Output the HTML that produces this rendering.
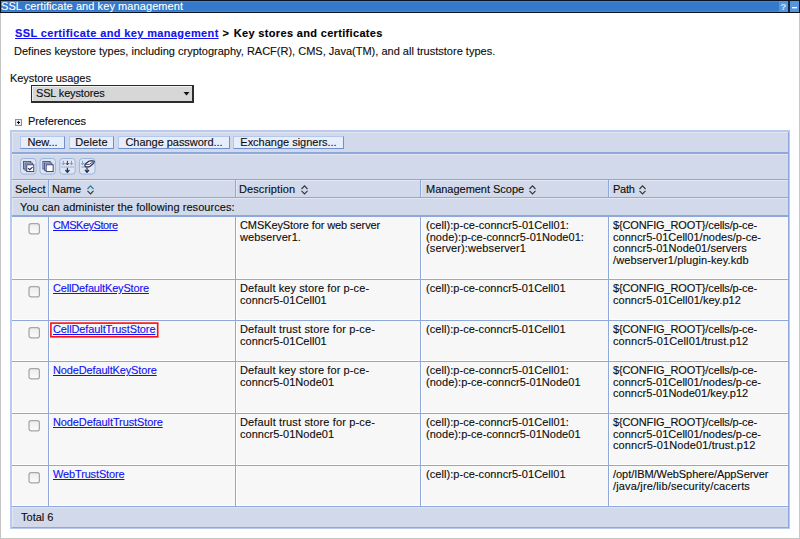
<!DOCTYPE html>
<html>
<head>
<meta charset="utf-8">
<title>SSL certificate and key management</title>
<style>
html,body{margin:0;padding:0;}
body{width:800px;height:539px;overflow:hidden;background:#fff;position:relative;
  font-family:"Liberation Sans",sans-serif;font-size:11.0px;line-height:13px;color:#0d0d0d;-webkit-text-stroke:0.12px;}
.abs{position:absolute;}
.t{position:absolute;white-space:nowrap;}
a{color:#1212f0;text-decoration:underline;}
#lb{left:0;top:13px;width:1px;height:526px;background:#c6c6c6;}
#rb{left:799px;top:13px;width:1px;height:526px;background:#c9c9c9;}
#bb{left:0;top:538px;width:800px;height:1px;background:#c6c6c6;}
#bar{left:0;top:0;width:800px;height:13px;background:#0b1220;}
#barin{left:1px;top:1px;width:798px;height:11px;background:#3479cb;
  box-shadow:inset 0 1px 0 #4587d6, inset 0 -1px 0 #3f88e2;}
#bartxt{left:1px;top:0px;color:#fff;line-height:13px;}
.tb{position:absolute;top:1px;height:11px;background:#5795dc;}
#tbl{left:12px;top:132px;width:777px;height:396px;background:#8fa8da;}
#tblo{left:10px;top:130px;width:780px;height:399px;background:#bac9ed;}
.cell{position:absolute;background:#d1d9ea;box-shadow:inset 1px 1px 0 #e1e7f3;}
.row{position:absolute;background:#f7f7f7;box-shadow:inset 1px 0 0 #fff, inset 0 -1px 0 #fff;}
.btn{position:absolute;top:136px;height:13px;box-sizing:border-box;background:#e7eefb;
  border:1px solid #b5c8ec;border-right-color:#6f8fcd;border-bottom-color:#6f8fcd;
  text-align:center;line-height:11px;white-space:nowrap;}
.ico{position:absolute;top:158px;width:16px;height:16px;box-sizing:border-box;border:1px solid #a9bbe0;border-radius:3px;background:#dfe6f5;}
.cb{position:absolute;left:29px;width:11px;height:11px;box-sizing:border-box;border:1px solid #9a9a9a;border-radius:2px;background:#f1f1f1;}
.txt{position:absolute;white-space:nowrap;line-height:11.65px;}
.srt{position:absolute;top:185px;}
</style>
</head>
<body>
<div class="abs" id="bar"></div>
<div class="abs" id="barin"></div>
<div class="t" id="bartxt"><span style="letter-spacing:0.082px">SSL certificate and key management</span></div>
<div class="abs" style="left:788px;top:1px;width:2px;height:11px;background:#16243f;"></div>
<div class="tb" style="left:779px;width:9px;"></div>
<div class="tb" style="left:790px;width:9px;"></div>
<div class="t" style="left:780.5px;top:0px;color:#d3e1f6;font-size:9.5px;line-height:13px;font-weight:bold;">?</div>
<div class="abs" style="left:792px;top:7px;width:5px;height:1px;background:#fff;box-shadow:0 1px 0 rgba(255,255,255,.35);"></div>
<div class="abs" id="lb"></div>
<div class="abs" id="rb"></div>
<div class="abs" id="bb"></div>
<div class="t" style="left:15px;top:27px;font-weight:bold;font-size:11.0px;line-height:13px;color:#000;"><a href="#"><span style="letter-spacing:0.368px">SSL certificate and key management</span></a><span style="letter-spacing:0.863px"> &gt; </span><span style="letter-spacing:0.331px">Key stores and certificates</span></div>
<div class="t" style="left:14px;top:45px;"><span style="letter-spacing:0.003px">Defines keystore types, including cryptography, RACF(R), CMS, Java(TM), and all truststore types.</span></div>
<div class="t" style="left:10px;top:72px;"><span style="letter-spacing:-0.073px">Keystore usages</span></div>
<div class="abs" style="left:31px;top:85px;width:163px;height:18px;box-sizing:border-box;background:#d7d7d7;border:1px solid #2c2c2c;border-right-width:2px;border-bottom-width:2px;box-shadow:inset 1px 1px 0 #f0f0f0;"></div>
<div class="t" style="left:36px;top:87px;"><span style="letter-spacing:-0.157px">SSL keystores</span></div>
<svg class="abs" style="left:183px;top:92px;" width="7" height="4" viewBox="0 0 7 4"><path d="M0.5 0 H6.5 L3.5 3.5 Z" fill="#111"/></svg>
<div class="abs" style="left:15px;top:119px;width:7px;height:7px;box-sizing:border-box;border:1px solid #8e8ea2;background:#e9e9f0;"></div>
<div class="abs" style="left:17px;top:122px;width:3px;height:1px;background:#111;"></div>
<div class="abs" style="left:18px;top:121px;width:1px;height:3px;background:#111;"></div>
<div class="t" style="left:28px;top:115px;"><span style="letter-spacing:-0.12px">Preferences</span></div>
<div class="abs" id="tblo"></div><div class="abs" id="tbl"></div>
<div class="cell" style="left:12px;top:132px;width:776px;height:20px;"></div>
<div class="btn" style="left:20px;width:45px;"><span style="letter-spacing:-0.094px">New...</span></div>
<div class="btn" style="left:69px;width:45px;"><span style="letter-spacing:0.1px">Delete</span></div>
<div class="btn" style="left:118px;width:112px;"><span style="letter-spacing:-0.041px">Change password...</span></div>
<div class="btn" style="left:233px;width:111px;"><span style="letter-spacing:-0.014px">Exchange signers...</span></div>
<div class="cell" style="left:12px;top:154px;width:776px;height:25px;"></div>
<svg class="abs" style="left:0;top:150px;" width="120" height="32" viewBox="0 150 120 32"><g transform="translate(0,0)"><rect x="20.6" y="158.5" width="15.4" height="15.6" rx="3" fill="#dfe5f3" stroke="#9db4dd"/><rect x="23.5" y="161.5" width="7.3" height="7.4" fill="#bcc5de" stroke="#47517f" stroke-width="0.9"/><rect x="25.1" y="163.1" width="7.3" height="7.2" fill="#cfd6e8" stroke="#47517f" stroke-width="0.9"/><rect x="26.75" y="164.75" width="7" height="6.8" fill="#fff" stroke="#3a4478" stroke-width="1"/><path d="M28.1 168.1 L29.7 169.6 L32.6 167.1" fill="none" stroke="#252c55" stroke-width="1.2"/></g><g transform="translate(19.4,0)"><rect x="20.6" y="158.5" width="15.4" height="15.6" rx="3" fill="#dfe5f3" stroke="#9db4dd"/><rect x="23.5" y="161.5" width="7.3" height="7.4" fill="#bcc5de" stroke="#47517f" stroke-width="0.9"/><rect x="25.1" y="163.1" width="7.3" height="7.2" fill="#cfd6e8" stroke="#47517f" stroke-width="0.9"/><rect x="26.75" y="164.75" width="7" height="6.8" fill="#fff" stroke="#3a4478" stroke-width="1"/></g><rect x="59.8" y="158.5" width="15.4" height="15.6" rx="3" fill="#dfe5f3" stroke="#9db4dd"/><path d="M63.3 160.8 V164.6 M61.8 163.1 L63.3 164.9 L64.8 163.1" fill="none" stroke="#6596cf" stroke-width="0.9"/><path d="M67.4 160.8 V164.6 M65.9 163.1 L67.4 164.9 L68.9 163.1" fill="none" stroke="#252c55" stroke-width="0.9"/><path d="M71.5 160.8 V164.6 M70.0 163.1 L71.5 164.9 L73.0 163.1" fill="none" stroke="#6596cf" stroke-width="0.9"/><path d="M61.3 167 H73.8" stroke="#8d9bb9" stroke-width="1" stroke-dasharray="1.6 0.6"/><path d="M67.4 167.8 V172 M65.4 170 L67.4 172.3 L69.4 170" fill="none" stroke="#252c55" stroke-width="1.15"/><rect x="79.4" y="158.5" width="15.6" height="15.6" rx="3" fill="#dfe5f3" stroke="#9db4dd"/><path d="M82.6 160.8 V164.6 M81.1 163.1 L82.6 164.9 L84.1 163.1" fill="none" stroke="#6596cf" stroke-width="0.9"/><path d="M81.3 167 H89.5" stroke="#8d9bb9" stroke-width="1"/><path d="M85 164.7 Q85 164 85.8 163.5 L88.9 161.3 Q89.6 160.8 90.5 160.8 H92.6 Q94.7 160.8 94.1 162.4 Q93.9 163 93 163.8 L90.2 166.2 Q89.6 166.8 88.6 166.8 H86 Q84.9 166.8 84.9 165.8 Z" fill="#fff" stroke="#252c55" stroke-width="1.2"/><path d="M85.4 164.3 H89.5 L93.1 161.7" fill="none" stroke="#252c55" stroke-width="0.9"/><path d="M87 167.8 V172 M85.0 170 L87 172.3 L89.0 170" fill="none" stroke="#252c55" stroke-width="1.15"/></svg>
<div class="cell" style="left:12px;top:180px;width:36px;height:17px;"></div>
<div class="cell" style="left:49px;top:180px;width:186px;height:17px;"></div>
<div class="cell" style="left:236px;top:180px;width:184px;height:17px;"></div>
<div class="cell" style="left:421px;top:180px;width:187px;height:17px;"></div>
<div class="cell" style="left:609px;top:180px;width:179px;height:17px;"></div>
<div class="txt" style="left:15px;top:184px;"><span style="letter-spacing:-0.026px">Select</span></div>
<div class="txt" style="left:52px;top:184px;"><span style="letter-spacing:-0.063px">Name</span></div>
<svg class="srt" style="left:86.5px;" width="8" height="10" viewBox="0 0 8 10"><path d="M0.5 4 L3.5 0.9 L6.5 4" fill="none" stroke="#1f7f92" stroke-width="1.1"/><path d="M0.5 5.9 L3.5 9 L6.5 5.9" fill="none" stroke="#333" stroke-width="1.1"/></svg>
<div class="txt" style="left:239px;top:184px;"><span style="letter-spacing:0.103px">Description</span></div>
<svg class="srt" style="left:300.8px;" width="8" height="10" viewBox="0 0 8 10"><path d="M0.5 4 L3.5 0.9 L6.5 4" fill="none" stroke="#333" stroke-width="1.1"/><path d="M0.5 5.9 L3.5 9 L6.5 5.9" fill="none" stroke="#333" stroke-width="1.1"/></svg>
<div class="txt" style="left:426px;top:184px;"><span style="letter-spacing:-0.021px">Management Scope</span></div>
<svg class="srt" style="left:528.8px;" width="8" height="10" viewBox="0 0 8 10"><path d="M0.5 4 L3.5 0.9 L6.5 4" fill="none" stroke="#333" stroke-width="1.1"/><path d="M0.5 5.9 L3.5 9 L6.5 5.9" fill="none" stroke="#333" stroke-width="1.1"/></svg>
<div class="txt" style="left:613px;top:184px;"><span style="letter-spacing:-0.242px">Path</span></div>
<svg class="srt" style="left:639.2px;" width="8" height="10" viewBox="0 0 8 10"><path d="M0.5 4 L3.5 0.9 L6.5 4" fill="none" stroke="#333" stroke-width="1.1"/><path d="M0.5 5.9 L3.5 9 L6.5 5.9" fill="none" stroke="#333" stroke-width="1.1"/></svg>
<div class="cell" style="left:12px;top:198px;width:776px;height:17px;"></div>
<div class="txt" style="left:20px;top:202px;"><span style="letter-spacing:0.069px">You can administer the following resources:</span></div>
<div class="row" style="left:12px;top:217px;width:36px;height:62px;"></div>
<div class="row" style="left:49px;top:217px;width:186px;height:62px;"></div>
<div class="row" style="left:236px;top:217px;width:184px;height:62px;"></div>
<div class="row" style="left:421px;top:217px;width:187px;height:62px;"></div>
<div class="row" style="left:609px;top:217px;width:179px;height:62px;"></div>
<svg class="abs" style="left:27px;top:222px;" width="15" height="15" viewBox="0 0 15 15"><defs><linearGradient id="g217" x1="0" y1="0" x2="0" y2="1"><stop offset="0" stop-color="#ececec"/><stop offset="1" stop-color="#fbfbfb"/></linearGradient></defs><rect x="2" y="1.5" width="10.4" height="10.4" rx="2.2" fill="url(#g217)" stroke="#a6a6a6" stroke-width="1.25"/></svg>
<div class="txt" style="left:53px;top:220px;"><a href="#"><span style="letter-spacing:-0.464px">CMSKeyStore</span></a></div>
<div class="txt" style="left:240px;top:220px;"><span style="letter-spacing:-0.088px">CMSKeyStore for web server</span><br><span style="letter-spacing:0.099px">webserver1.</span></div>
<div class="txt" style="left:426px;top:220px;"><span style="letter-spacing:0.059px">(cell):p-ce-conncr5-01Cell01:</span><br><span style="letter-spacing:0.047px">(node):p-ce-conncr5-01Node01:</span><br><span style="letter-spacing:0.121px">(server):webserver1</span></div>
<div class="txt" style="left:613px;top:220px;"><span style="letter-spacing:-0.128px">${CONFIG_ROOT}/cells/p-ce-</span><br><span style="letter-spacing:0.024px">conncr5-01Cell01/nodes/p-ce-</span><br><span style="letter-spacing:0.045px">conncr5-01Node01/servers</span><br><span style="letter-spacing:0.104px">/webserver1/plugin-key.kdb</span></div>
<div class="row" style="left:12px;top:280px;width:36px;height:40px;"></div>
<div class="row" style="left:49px;top:280px;width:186px;height:40px;"></div>
<div class="row" style="left:236px;top:280px;width:184px;height:40px;"></div>
<div class="row" style="left:421px;top:280px;width:187px;height:40px;"></div>
<div class="row" style="left:609px;top:280px;width:179px;height:40px;"></div>
<svg class="abs" style="left:27px;top:285px;" width="15" height="15" viewBox="0 0 15 15"><defs><linearGradient id="g280" x1="0" y1="0" x2="0" y2="1"><stop offset="0" stop-color="#ececec"/><stop offset="1" stop-color="#fbfbfb"/></linearGradient></defs><rect x="2" y="1.5" width="10.4" height="10.4" rx="2.2" fill="url(#g280)" stroke="#a6a6a6" stroke-width="1.25"/></svg>
<div class="txt" style="left:53px;top:283px;"><a href="#"><span style="letter-spacing:-0.167px">CellDefaultKeyStore</span></a></div>
<div class="txt" style="left:240px;top:283px;"><span style="letter-spacing:0.097px">Default key store for p-ce-</span><br><span style="letter-spacing:0.035px">conncr5-01Cell01</span></div>
<div class="txt" style="left:426px;top:283px;"><span style="letter-spacing:0.052px">(cell):p-ce-conncr5-01Cell01</span></div>
<div class="txt" style="left:613px;top:283px;"><span style="letter-spacing:-0.128px">${CONFIG_ROOT}/cells/p-ce-</span><br><span style="letter-spacing:0.038px">conncr5-01Cell01/key.p12</span></div>
<div class="row" style="left:12px;top:321px;width:36px;height:40px;"></div>
<div class="row" style="left:49px;top:321px;width:186px;height:40px;"></div>
<div class="row" style="left:236px;top:321px;width:184px;height:40px;"></div>
<div class="row" style="left:421px;top:321px;width:187px;height:40px;"></div>
<div class="row" style="left:609px;top:321px;width:179px;height:40px;"></div>
<svg class="abs" style="left:27px;top:326px;" width="15" height="15" viewBox="0 0 15 15"><defs><linearGradient id="g321" x1="0" y1="0" x2="0" y2="1"><stop offset="0" stop-color="#ececec"/><stop offset="1" stop-color="#fbfbfb"/></linearGradient></defs><rect x="2" y="1.5" width="10.4" height="10.4" rx="2.2" fill="url(#g321)" stroke="#a6a6a6" stroke-width="1.25"/></svg>
<svg class="abs" style="left:48px;top:321px;" width="114" height="20" viewBox="0 0 114 20"><rect x="2.9" y="2.1" width="106.8" height="13.7" fill="none" stroke="#fb0d12" stroke-width="1.6"/></svg>
<div class="txt" style="left:53px;top:324px;"><a href="#"><span style="letter-spacing:-0.112px">CellDefaultTrustStore</span></a></div>
<div class="txt" style="left:240px;top:324px;"><span style="letter-spacing:0.147px">Default trust store for p-ce-</span><br><span style="letter-spacing:0.035px">conncr5-01Cell01</span></div>
<div class="txt" style="left:426px;top:324px;"><span style="letter-spacing:0.052px">(cell):p-ce-conncr5-01Cell01</span></div>
<div class="txt" style="left:613px;top:324px;"><span style="letter-spacing:-0.128px">${CONFIG_ROOT}/cells/p-ce-</span><br><span style="letter-spacing:0.121px">conncr5-01Cell01/trust.p12</span></div>
<div class="row" style="left:12px;top:362px;width:36px;height:51px;"></div>
<div class="row" style="left:49px;top:362px;width:186px;height:51px;"></div>
<div class="row" style="left:236px;top:362px;width:184px;height:51px;"></div>
<div class="row" style="left:421px;top:362px;width:187px;height:51px;"></div>
<div class="row" style="left:609px;top:362px;width:179px;height:51px;"></div>
<svg class="abs" style="left:27px;top:367px;" width="15" height="15" viewBox="0 0 15 15"><defs><linearGradient id="g362" x1="0" y1="0" x2="0" y2="1"><stop offset="0" stop-color="#ececec"/><stop offset="1" stop-color="#fbfbfb"/></linearGradient></defs><rect x="2" y="1.5" width="10.4" height="10.4" rx="2.2" fill="url(#g362)" stroke="#a6a6a6" stroke-width="1.25"/></svg>
<div class="txt" style="left:53px;top:365px;"><a href="#"><span style="letter-spacing:-0.142px">NodeDefaultKeyStore</span></a></div>
<div class="txt" style="left:240px;top:365px;"><span style="letter-spacing:0.097px">Default key store for p-ce-</span><br><span style="letter-spacing:0.033px">conncr5-01Node01</span></div>
<div class="txt" style="left:426px;top:365px;"><span style="letter-spacing:0.059px">(cell):p-ce-conncr5-01Cell01:</span><br><span style="letter-spacing:0.039px">(node):p-ce-conncr5-01Node01</span></div>
<div class="txt" style="left:613px;top:365px;"><span style="letter-spacing:-0.128px">${CONFIG_ROOT}/cells/p-ce-</span><br><span style="letter-spacing:0.024px">conncr5-01Cell01/nodes/p-ce-</span><br><span style="letter-spacing:0.036px">conncr5-01Node01/key.p12</span></div>
<div class="row" style="left:12px;top:414px;width:36px;height:51px;"></div>
<div class="row" style="left:49px;top:414px;width:186px;height:51px;"></div>
<div class="row" style="left:236px;top:414px;width:184px;height:51px;"></div>
<div class="row" style="left:421px;top:414px;width:187px;height:51px;"></div>
<div class="row" style="left:609px;top:414px;width:179px;height:51px;"></div>
<svg class="abs" style="left:27px;top:419px;" width="15" height="15" viewBox="0 0 15 15"><defs><linearGradient id="g414" x1="0" y1="0" x2="0" y2="1"><stop offset="0" stop-color="#ececec"/><stop offset="1" stop-color="#fbfbfb"/></linearGradient></defs><rect x="2" y="1.5" width="10.4" height="10.4" rx="2.2" fill="url(#g414)" stroke="#a6a6a6" stroke-width="1.25"/></svg>
<div class="txt" style="left:53px;top:417px;"><a href="#"><span style="letter-spacing:-0.114px">NodeDefaultTrustStore</span></a></div>
<div class="txt" style="left:240px;top:417px;"><span style="letter-spacing:0.147px">Default trust store for p-ce-</span><br><span style="letter-spacing:0.033px">conncr5-01Node01</span></div>
<div class="txt" style="left:426px;top:417px;"><span style="letter-spacing:0.059px">(cell):p-ce-conncr5-01Cell01:</span><br><span style="letter-spacing:0.039px">(node):p-ce-conncr5-01Node01</span></div>
<div class="txt" style="left:613px;top:417px;"><span style="letter-spacing:-0.128px">${CONFIG_ROOT}/cells/p-ce-</span><br><span style="letter-spacing:0.024px">conncr5-01Cell01/nodes/p-ce-</span><br><span style="letter-spacing:0.119px">conncr5-01Node01/trust.p12</span></div>
<div class="row" style="left:12px;top:466px;width:36px;height:40px;"></div>
<div class="row" style="left:49px;top:466px;width:186px;height:40px;"></div>
<div class="row" style="left:236px;top:466px;width:184px;height:40px;"></div>
<div class="row" style="left:421px;top:466px;width:187px;height:40px;"></div>
<div class="row" style="left:609px;top:466px;width:179px;height:40px;"></div>
<svg class="abs" style="left:27px;top:471px;" width="15" height="15" viewBox="0 0 15 15"><defs><linearGradient id="g466" x1="0" y1="0" x2="0" y2="1"><stop offset="0" stop-color="#ececec"/><stop offset="1" stop-color="#fbfbfb"/></linearGradient></defs><rect x="2" y="1.5" width="10.4" height="10.4" rx="2.2" fill="url(#g466)" stroke="#a6a6a6" stroke-width="1.25"/></svg>
<div class="txt" style="left:53px;top:469px;"><a href="#"><span style="letter-spacing:-0.148px">WebTrustStore</span></a></div>
<div class="txt" style="left:426px;top:469px;"><span style="letter-spacing:0.052px">(cell):p-ce-conncr5-01Cell01</span></div>
<div class="txt" style="left:613px;top:469px;"><span style="letter-spacing:-0.053px">/opt/IBM/WebSphere/AppServer</span><br><span style="letter-spacing:0.166px">/java/jre/lib/security/cacerts</span></div>
<div class="cell" style="left:12px;top:507px;width:776px;height:20px;"></div>
<div class="txt" style="left:21px;top:512px;"><span style="letter-spacing:0.004px">Total 6</span></div>
</body>
</html>
